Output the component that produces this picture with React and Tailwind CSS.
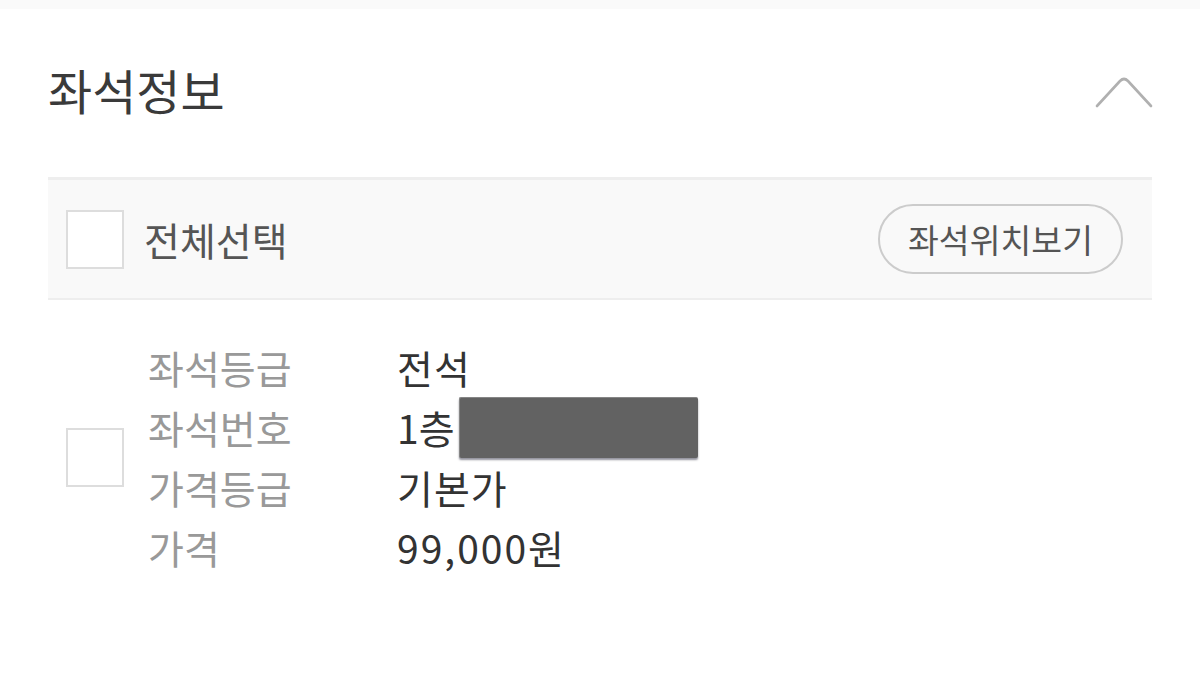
import React from "react";

const font = { fontFamily: '"Noto Sans CJK KR", "Noto Sans", sans-serif' };

function Box() {
  return <div className="w-[58px] h-[59px] border-2 border-[#dddddd] bg-white shrink-0" />;
}

export default function App() {
  const rows = [
    ["좌석등급", "전석", "tracking-[1px]"],
    ["좌석번호", null, ""],
    ["가격등급", "기본가", "tracking-[1px]"],
    ["가격", "99,000원", "tracking-[2px]"],
  ];
  return (
    <div className="w-[1200px] h-[677px] bg-white overflow-hidden" style={font}>
      <div className="h-[9px] bg-[#fafafa]" />
      <div className="px-[48px]">
        <div className="h-[168px] flex items-center justify-between pb-[8px]">
          <div className="text-[48px] leading-none text-[#3a3a3a]">좌석정보</div>
          <svg width="58" height="34" viewBox="0 0 58 34" className="mr-[-1px] mt-[6px]">
            <path d="M2 31 L25 6 Q29 2 33 6 L56 31" fill="none" stroke="#b0b0b0" strokeWidth="2.6" strokeLinecap="round" strokeLinejoin="round" />
          </svg>
        </div>
        <div className="border-t-[3px] border-b-2 border-[#eeeeee] bg-[#f9f9f9] h-[123px] flex items-center justify-between pl-[18px] pr-[29px]">
          <div className="flex items-center gap-[20px]">
            <Box />
            <span className="text-[39px] leading-none text-[#555555]">전체선택</span>
          </div>
          <div className="h-[70px] w-[245px] rounded-full border-2 border-[#cccccc] flex items-center justify-center text-[33.5px] text-[#555555] leading-none">
            좌석위치보기
          </div>
        </div>
        <div className="flex items-center pl-[18px] pt-[37px]">
          <Box />
          <div className="ml-[24px] flex flex-col">
            {rows.map(([label, value, tr]) => (
              <div key={label} className="h-[60px] flex items-center">
                <span className="w-[249px] text-[39px] leading-none text-[#999999]">{label}</span>
                {value !== null ? (
                  <span className={`text-[39px] leading-none text-[#333333] ${tr}`}>{value}</span>
                ) : (
                  <span className="flex items-center">
                    <span className="text-[39px] leading-none text-[#333333]">1층</span>
                    <span className="ml-[4px] w-[239px] h-[61px] bg-[#626262] rounded-[2px] border-t border-l border-[#858585] shadow-[0_2px_2px_rgba(40,40,60,0.5)]" />
                  </span>
                )}
              </div>
            ))}
          </div>
        </div>
      </div>
    </div>
  );
}
